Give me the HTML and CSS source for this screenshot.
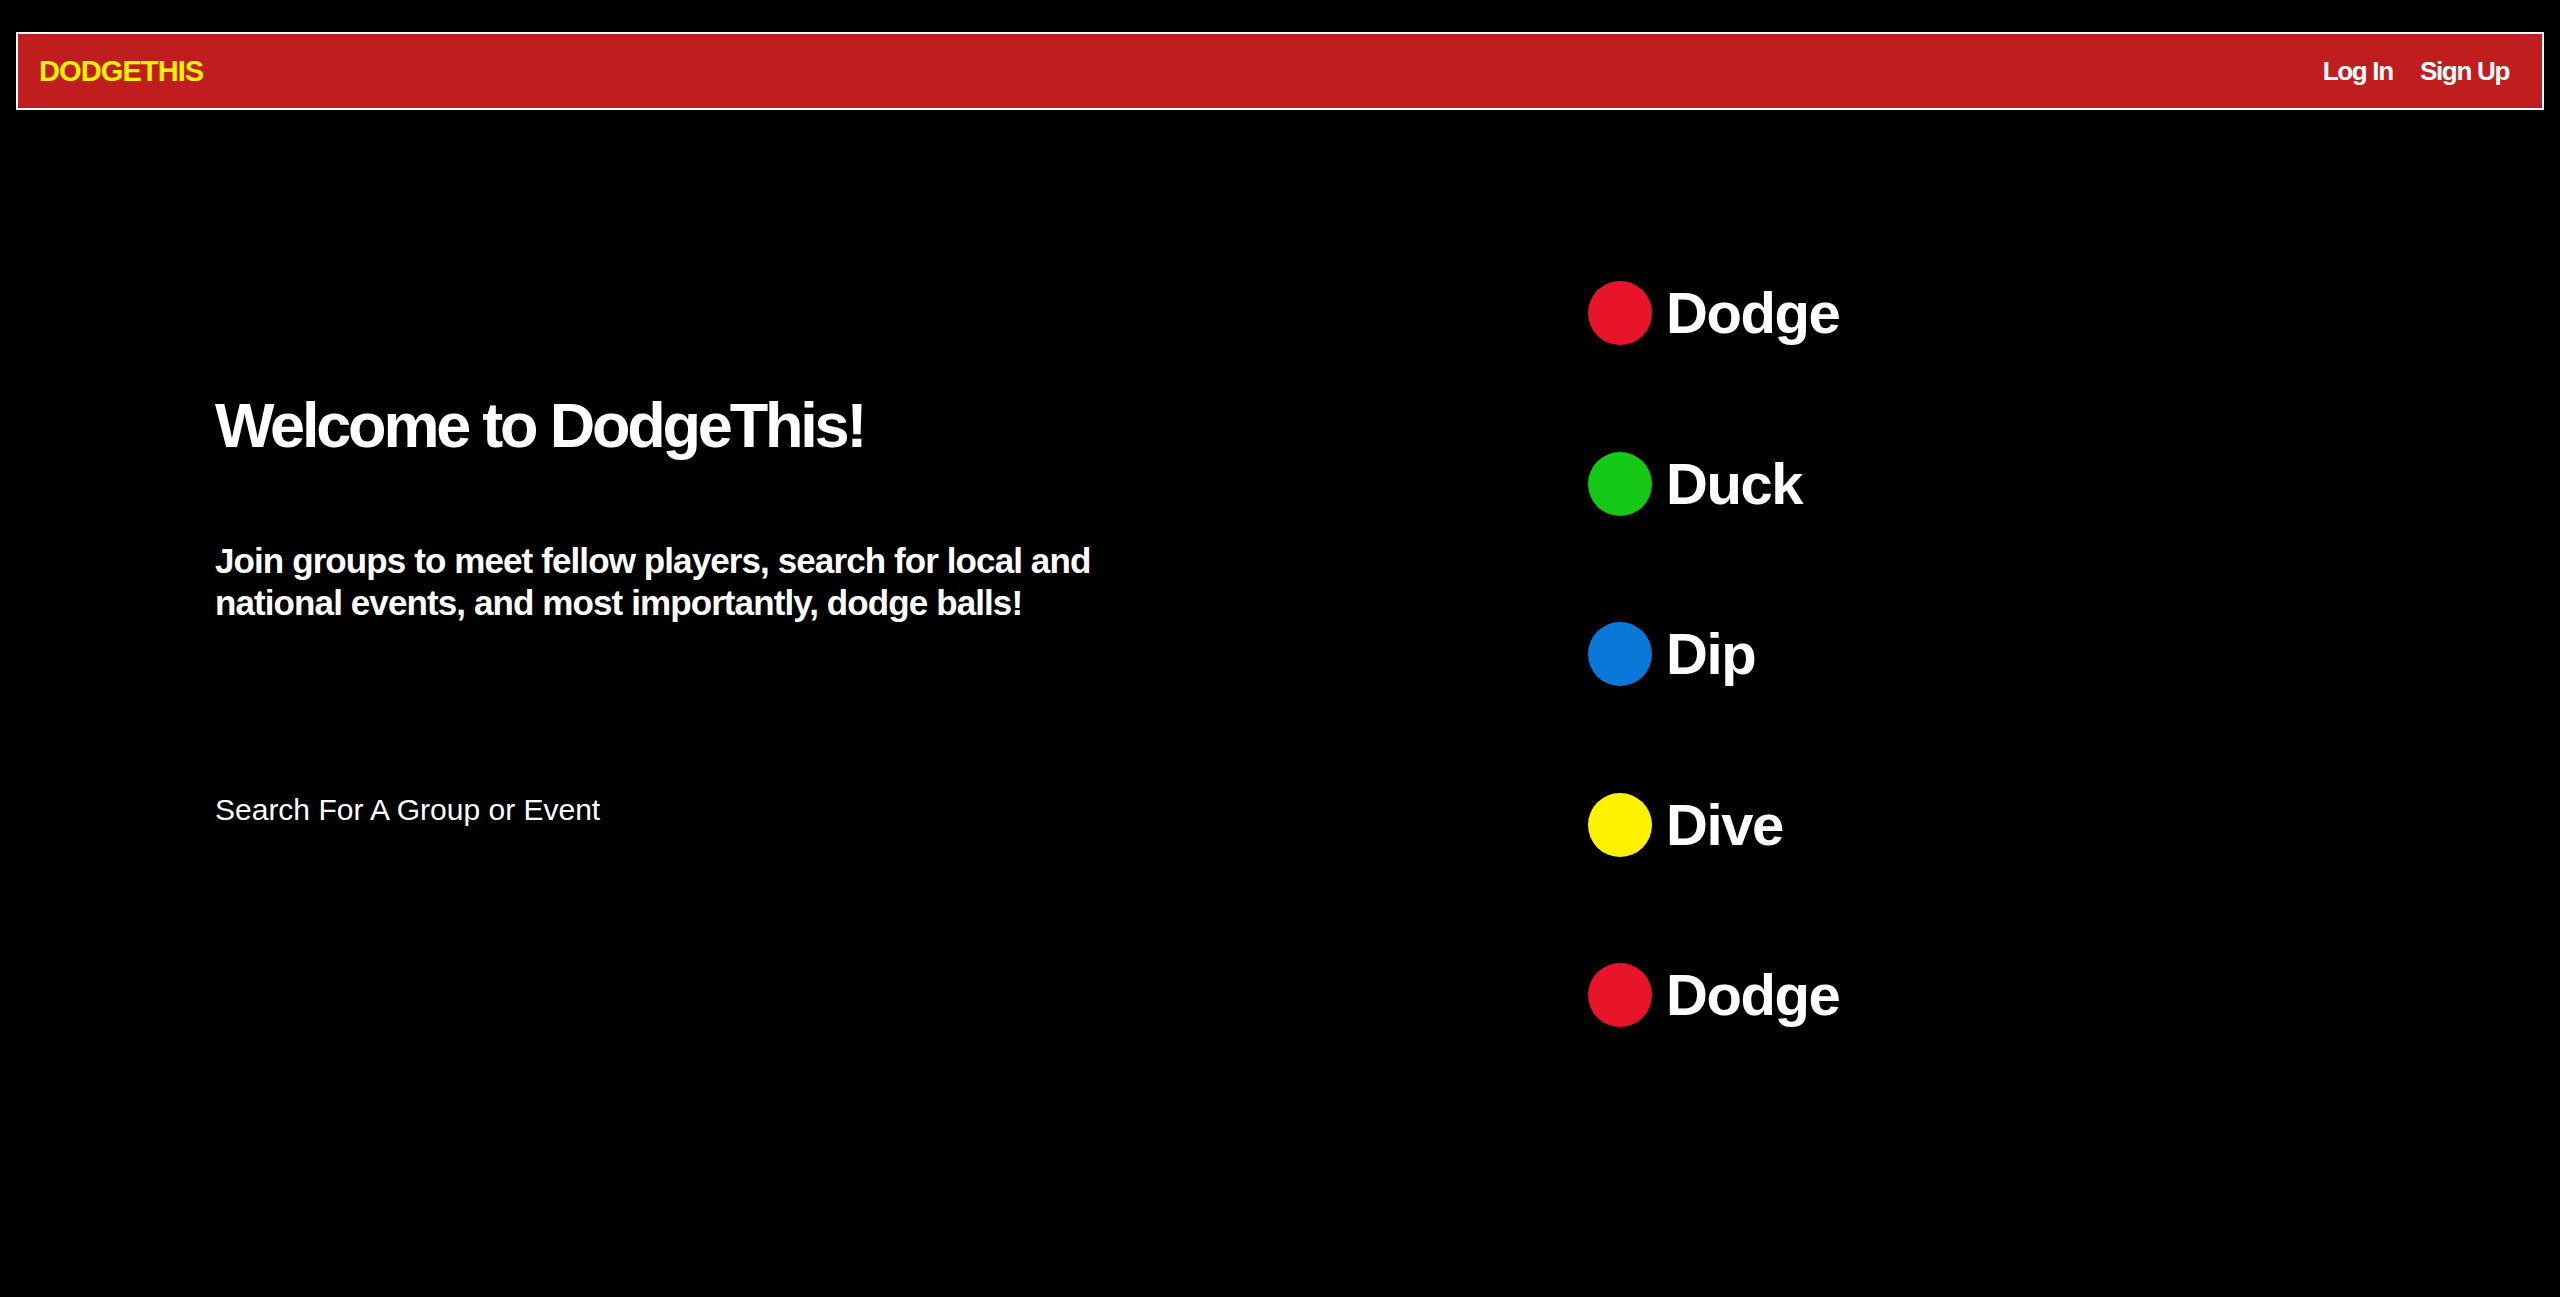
FILE: index.html
```html
<!DOCTYPE html>
<html lang="en">
<head>
<meta charset="utf-8">
<title>DodgeThis</title>
<link rel="stylesheet" href="styles.css">
</head>
<body>
<div class="page">
  <nav class="navbar">
    <a class="brand" href="#">DODGETHIS</a>
    <div class="nav-links">
      <a class="nav-link" href="#">Log In</a>
      <a class="nav-link" href="#">Sign Up</a>
    </div>
  </nav>
  <main class="hero">
    <section class="intro">
      <h1 class="title">Welcome to DodgeThis!</h1>
      <p class="lead">Join groups to meet fellow players, search for local and national events, and most importantly, dodge balls!</p>
      <a class="search-link" href="#">Search For A Group or Event</a>
    </section>
    <ul class="moves">
      <li class="move"><span class="ball ball-red"></span><span class="move-name">Dodge</span></li>
      <li class="move"><span class="ball ball-green"></span><span class="move-name">Duck</span></li>
      <li class="move"><span class="ball ball-blue"></span><span class="move-name">Dip</span></li>
      <li class="move"><span class="ball ball-yellow"></span><span class="move-name">Dive</span></li>
      <li class="move"><span class="ball ball-red"></span><span class="move-name">Dodge</span></li>
    </ul>
  </main>
</div>
</body>
</html>
```

FILE: styles.css
```css
* { box-sizing: border-box; }

html, body {
  margin: 0;
  padding: 0;
  background: #000;
  color: #fff;
  font-family: "Liberation Sans", Arial, sans-serif;
}

a { color: inherit; text-decoration: none; }

.page {
  padding: 32px 16px 0;
}

.navbar {
  height: 78px;
  border: 2px solid #fff;
  background: #bf1d1e;
  display: flex;
  align-items: center;
  justify-content: space-between;
  padding: 0 33px 0 21px;
}

.brand {
  color: #fff200;
  font-size: 29px;
  font-weight: 700;
  letter-spacing: -0.9px;
}

.nav-links {
  display: flex;
  gap: 27px;
}

.nav-link {
  font-size: 26px;
  font-weight: 700;
  letter-spacing: -1.3px;
}

.hero {
  display: grid;
  grid-template-columns: 1373px auto;
  padding-left: 199px;
}

.intro {
  padding-top: 279px;
}

.title {
  margin: 0;
  font-size: 63px;
  line-height: 72px;
  font-weight: 700;
  letter-spacing: -3.2px;
}

.lead {
  margin: 79px 0 0;
  width: 900px;
  font-size: 35px;
  line-height: 42px;
  font-weight: 700;
  letter-spacing: -0.9px;
}

.search-link {
  display: block;
  margin-top: 168px;
  font-size: 30px;
  line-height: 36px;
}

.moves {
  list-style: none;
  margin: 171px 0 0;
  padding: 0;
  display: flex;
  flex-direction: column;
  gap: 106.5px;
}

.move {
  height: 64px;
  display: flex;
  align-items: center;
  gap: 14px;
}

.ball {
  width: 64px;
  height: 64px;
  border-radius: 50%;
  flex: none;
}

.ball-red { background: #e8142a; }
.ball-green { background: #16c816; }
.ball-blue { background: #0a78d8; }
.ball-yellow { background: #fff200; }

.move-name {
  font-size: 58px;
  line-height: 64px;
  font-weight: 700;
  letter-spacing: -1.4px;
}
```
